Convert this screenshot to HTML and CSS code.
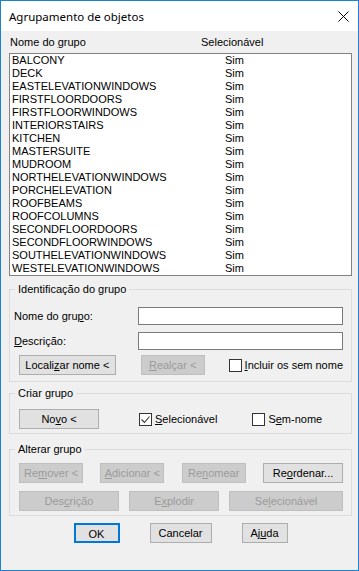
FILE: index.html
```html
<!DOCTYPE html>
<html lang="pt">
<head>
    <meta charset="UTF-8">
    <meta name="viewport" content="width=device-width, initial-scale=1.0">
    <title>Agrupamento de objetos</title>
    <link rel="stylesheet" href="styles.css">
</head>
<body>
  <div class="window">
    <header class="titlebar">
      <span class="title">Agrupamento de objetos</span>
      <svg class="close" width="11" height="11" viewBox="0 0 11 11">
        <path d="M0.5 0.5 L10.5 10.5 M10.5 0.5 L0.5 10.5" stroke="#000" stroke-width="1" fill="none" />
      </svg>
    </header>

    <div class="client">
      <div class="list-head">
        <span class="col-name">Nome do <u>g</u>rupo</span>
        <span class="col-sel">Selecionável</span>
      </div>

      <div class="listbox">
        <div class="row"><span>BALCONY</span><span>Sim</span></div>
        <div class="row"><span>DECK</span><span>Sim</span></div>
        <div class="row"><span>EASTELEVATIONWINDOWS</span><span>Sim</span></div>
        <div class="row"><span>FIRSTFLOORDOORS</span><span>Sim</span></div>
        <div class="row"><span>FIRSTFLOORWINDOWS</span><span>Sim</span></div>
        <div class="row"><span>INTERIORSTAIRS</span><span>Sim</span></div>
        <div class="row"><span>KITCHEN</span><span>Sim</span></div>
        <div class="row"><span>MASTERSUITE</span><span>Sim</span></div>
        <div class="row"><span>MUDROOM</span><span>Sim</span></div>
        <div class="row"><span>NORTHELEVATIONWINDOWS</span><span>Sim</span></div>
        <div class="row"><span>PORCHELEVATION</span><span>Sim</span></div>
        <div class="row"><span>ROOFBEAMS</span><span>Sim</span></div>
        <div class="row"><span>ROOFCOLUMNS</span><span>Sim</span></div>
        <div class="row"><span>SECONDFLOORDOORS</span><span>Sim</span></div>
        <div class="row"><span>SECONDFLOORWINDOWS</span><span>Sim</span></div>
        <div class="row"><span>SOUTHELEVATIONWINDOWS</span><span>Sim</span></div>
        <div class="row"><span>WESTELEVATIONWINDOWS</span><span>Sim</span></div>
      </div>

      <!-- Identificação -->
      <fieldset class="group group-id">
        <legend>Identificação do grupo</legend>
        <div class="group-body">
          <div class="field">
            <label>Nome do gru<u>p</u>o:</label>
            <div class="textbox"></div>
          </div>
          <div class="field">
            <label><u>D</u>escrição:</label>
            <div class="textbox"></div>
          </div>
          <div class="btn-row">
            <button class="btn w-localizar">Locali<u>z</u>ar nome &lt;</button>
            <button class="btn w-realcar" disabled><u>R</u>ealçar &lt;</button>
            <span class="check check-incluir"><span class="box"></span><u>I</u>ncluir os sem nome</span>
          </div>
        </div>
      </fieldset>

      <!-- Criar -->
      <fieldset class="group group-new">
        <legend>Criar grupo</legend>
        <div class="group-body">
          <div class="btn-row">
            <button class="btn w-novo">No<u>v</u>o &lt;</button>
            <span class="check check-sel">
              <span class="box">
                <svg width="11" height="11" viewBox="0 0 11 11">
                  <path d="M1.5 5.5 L4.5 8.5 L9.5 2.5" stroke="#333" stroke-width="1.1" fill="none" />
                </svg>
              </span><u>S</u>elecionável
            </span>
            <span class="check check-semnome"><span class="box"></span>S<u>e</u>m-nome</span>
          </div>
        </div>
      </fieldset>

      <!-- Alterar -->
      <fieldset class="group group-edit">
        <legend>Alterar grupo</legend>
        <div class="group-body">
          <div class="btn-line">
            <button class="btn w-64" disabled>Re<u>m</u>over &lt;</button>
            <button class="btn w-64" disabled><u>A</u>dicionar &lt;</button>
            <button class="btn w-64" disabled>Re<u>n</u>omear</button>
            <button class="btn w-80">Re<u>o</u>rdenar...</button>
          </div>
          <div class="btn-line">
            <button class="btn w-100" disabled>Des<u>c</u>rição</button>
            <button class="btn w-90" disabled>E<u>x</u>plodir</button>
            <button class="btn w-114" disabled>Se<u>l</u>ecionável</button>
          </div>
        </div>
      </fieldset>

      <div class="dialog-buttons">
        <button class="btn btn-default w-ok">OK</button>
        <button class="btn w-cancel">Cancelar</button>
        <button class="btn w-ok">Aj<u>u</u>da</button>
      </div>
    </div>
  </div>
</body>
</html>
```

FILE: styles.css
```css
html, body {
    margin: 0;
    padding: 0;
    background-color: #f0f0f0;
    font-family: 'Liberation Sans', Arial, sans-serif;
    font-size: 11px;
    color: #000;
}

u {
    text-decoration-thickness: 1px;
    text-underline-offset: 1px;
}

/* Window frame */
.window {
    box-sizing: border-box;
    width: 359px;
    height: 571px;
    border: 1px solid #1883d7;
    background-color: #f0f0f0;
    display: flex;
    flex-direction: column;
}

.titlebar {
    height: 30px;
    background-color: #fff;
    display: flex;
    align-items: center;
    justify-content: space-between;
    padding: 0 9px 0 8px;
}

.title {
    font-family: 'Noto Sans', 'Open Sans', sans-serif;
    font-size: 11.5px;
    color: #000;
}

.close {
    display: block;
}

/* Client area */
.client {
    padding: 5px 6px 0 8px;
    display: flex;
    flex-direction: column;
}

.list-head {
    display: flex;
    height: 13px;
    line-height: 13px;
    padding-left: 1px;
    margin-bottom: 4px;
}

.col-name {
    width: 191px;
}

.listbox {
    height: 223px;
    box-sizing: border-box;
    border: 1px solid #828282;
    background-color: #fff;
    padding-left: 2px;
}

.row {
    display: grid;
    grid-template-columns: 213px 1fr;
    height: 13px;
    line-height: 13px;
    white-space: nowrap;
}

/* Group boxes */
.group {
    margin: 0;
    padding: 0;
    min-width: 0;
    border: 1px solid #dcdcdc;
}

.group legend {
    margin-left: 5px;
    padding: 0 3px;
    line-height: 13px;
    height: 13px;
}

.group-id {
    margin-top: 7px;
}

.group-id .group-body {
    padding: 11px 8px 6px 4px;
}

.group-new {
    margin-top: 5px;
}

.group-new .group-body {
    padding: 9px 8px 4px 9px;
}

.group-edit {
    margin-top: 9px;
}

.group-edit .group-body {
    padding: 7px 8px 4px 9px;
    display: flex;
    flex-direction: column;
    gap: 8px;
}

.field {
    display: flex;
    align-items: center;
    margin-bottom: 7px;
}

.field label {
    width: 124px;
}

.textbox {
    flex: 1;
    height: 18px;
    box-sizing: border-box;
    border: 1px solid #7a7a7a;
    background-color: #fff;
}

.group-id .field:nth-child(2) {
    margin-bottom: 5px;
}

.btn-row {
    display: flex;
    align-items: center;
}

.group-id .btn-row {
    padding-left: 5px;
}

.btn-line {
    display: flex;
    justify-content: space-between;
}

/* Buttons */
.btn {
    box-sizing: border-box;
    height: 20px;
    padding: 0;
    margin: 0;
    font-family: inherit;
    font-size: 11px;
    color: #000;
    background-color: #e1e1e1;
    border: 1px solid #adadad;
    border-radius: 0;
    line-height: 18px;
    white-space: nowrap;
}

.btn:disabled {
    background-color: #cccccc;
    border-color: #bfbfbf;
    color: #9b9b9b;
}

.btn-default {
    border: 2px solid #0078d7;
}

.w-localizar { width: 100px; }
.w-realcar { width: 66px; margin-left: 25px; }
.w-novo { width: 80px; }
.w-64 { width: 64px; }
.w-80 { width: 80px; }
.w-100 { width: 100px; }
.w-90 { width: 90px; }
.w-114 { width: 114px; }
.w-ok { width: 46px; }
.w-cancel { width: 62px; }

/* Checkboxes */
.check {
    display: flex;
    align-items: center;
    white-space: nowrap;
}

.check .box {
    box-sizing: border-box;
    width: 13px;
    height: 13px;
    border: 1px solid #333;
    background-color: #fff;
    margin-right: 3px;
    display: flex;
    align-items: center;
    justify-content: center;
}

.check-incluir { margin-left: 24px; }
.check-sel { margin-left: 40px; }
.check-semnome { margin-left: 35px; }

/* Dialog buttons */
.dialog-buttons {
    display: flex;
    justify-content: center;
    gap: 30px;
    margin-top: 7px;
}
```
